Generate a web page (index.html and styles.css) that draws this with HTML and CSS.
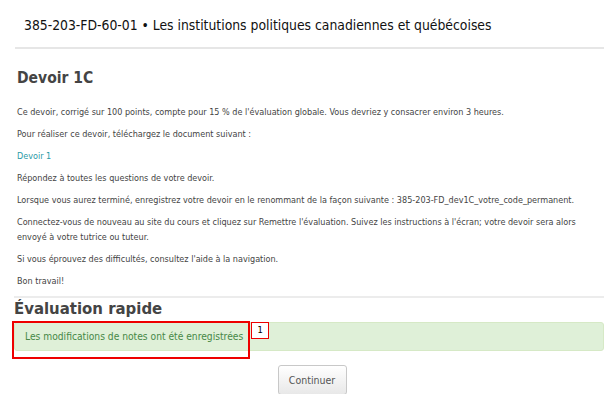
FILE: index.html
```html
<!DOCTYPE html>
<html lang="fr">

<head>
    <meta charset="UTF-8">
    <title>Devoir 1C</title>
    <link rel="stylesheet" href="styles.css">
</head>

<body>
    <header class="course-header">
        <h1>385-203-FD-60-01 &bull; Les institutions politiques canadiennes et québécoises</h1>
    </header>

    <div class="content">
        <h2 class="assign-title">Devoir 1C</h2>
        <p>Ce devoir, corrigé sur 100 points, compte pour 15 % de l'évaluation globale. Vous devriez y consacrer environ 3 heures.</p>
        <p>Pour réaliser ce devoir, téléchargez le document suivant :</p>
        <p><a href="#">Devoir 1</a></p>
        <p>Répondez à toutes les questions de votre devoir.</p>
        <p>Lorsque vous aurez terminé, enregistrez votre devoir en le renommant de la façon suivante : 385-203-FD_dev1C_votre_code_permanent.</p>
        <p class="narrow">Connectez-vous de nouveau au site du cours et cliquez sur Remettre l'évaluation. Suivez les instructions à l'écran; votre devoir sera alors envoyé à votre tutrice ou tuteur.</p>
        <p>Si vous éprouvez des difficultés, consultez l'aide à la navigation.</p>
        <p>Bon travail!</p>
    </div>

    <section class="quick">
        <h2 class="quick-title">Évaluation rapide</h2>
        <div class="alert">
            <span>Les modifications de notes ont été enregistrées</span>
            <div class="callout"></div>
            <span class="badge">1</span>
        </div>
        <div class="actions">
            <button class="btn">Continuer</button>
        </div>
    </section>
</body>

</html>
```

FILE: styles.css
```css
body {
    margin: 0;
    font-family: "DejaVu Sans Condensed", "DejaVu Sans", sans-serif;
    color: #333;
    background: #fff;
}

.course-header {
    margin: 0 7px 0 15px;
    border-bottom: 2px solid #e6e6e6;
    padding: 15px 0 12px 9px;
}

.course-header h1 {
    margin: 0;
    font-family: "DejaVu Sans Condensed", "DejaVu Sans", sans-serif;
    font-weight: normal;
    font-size: 13.8px;
    line-height: 20px;
    color: #111;
}

.content {
    padding: 18px 7px 0 17px;
}

.assign-title {
    margin: 0 0 16px;
    font-size: 15.5px;
    line-height: 22px;
    color: #444;
}

.content p {
    margin: 0 0 7px;
    font-size: 9px;
    line-height: 15px;
    color: #444;
}

.content p.narrow {
    max-width: 572px;
}

.content a {
    color: #2a9aa6;
    text-decoration: none;
}

.quick {
    margin: 3px 7px 0 14px;
    border-top: 2px solid #ececec;
}

.quick-title {
    margin: 0;
    padding-top: 1px;
    font-size: 16.6px;
    line-height: 20px;
    color: #444;
}

.alert {
    position: relative;
    margin-top: 3px;
    height: 27px;
    display: flex;
    align-items: center;
    padding-left: 10px;
    background: #dff0d8;
    border: 1px solid #d6e9c6;
    border-radius: 3px;
    font-size: 10.2px;
    color: #468847;
}

.callout {
    position: absolute;
    left: -3px;
    top: -2px;
    width: 234px;
    height: 34px;
    border: 2px solid #e00;
}

.badge {
    position: absolute;
    left: 236px;
    top: -1px;
    width: 16px;
    height: 15px;
    border: 1px solid #e00;
    background: #fff;
    font-family: "DejaVu Sans Mono", monospace;
    font-size: 9px;
    line-height: 15px;
    text-align: center;
    color: #000;
}

.actions {
    display: flex;
    justify-content: center;
    padding-top: 14px;
}

.btn {
    width: 69px;
    height: 30px;
    margin-left: 6px;
    border: 1px solid #c8c8c8;
    border-radius: 3px;
    background: linear-gradient(#fff, #e8e8e8);
    font-family: "DejaVu Sans Condensed", "DejaVu Sans", sans-serif;
    font-size: 10.5px;
    color: #555;
}
```
